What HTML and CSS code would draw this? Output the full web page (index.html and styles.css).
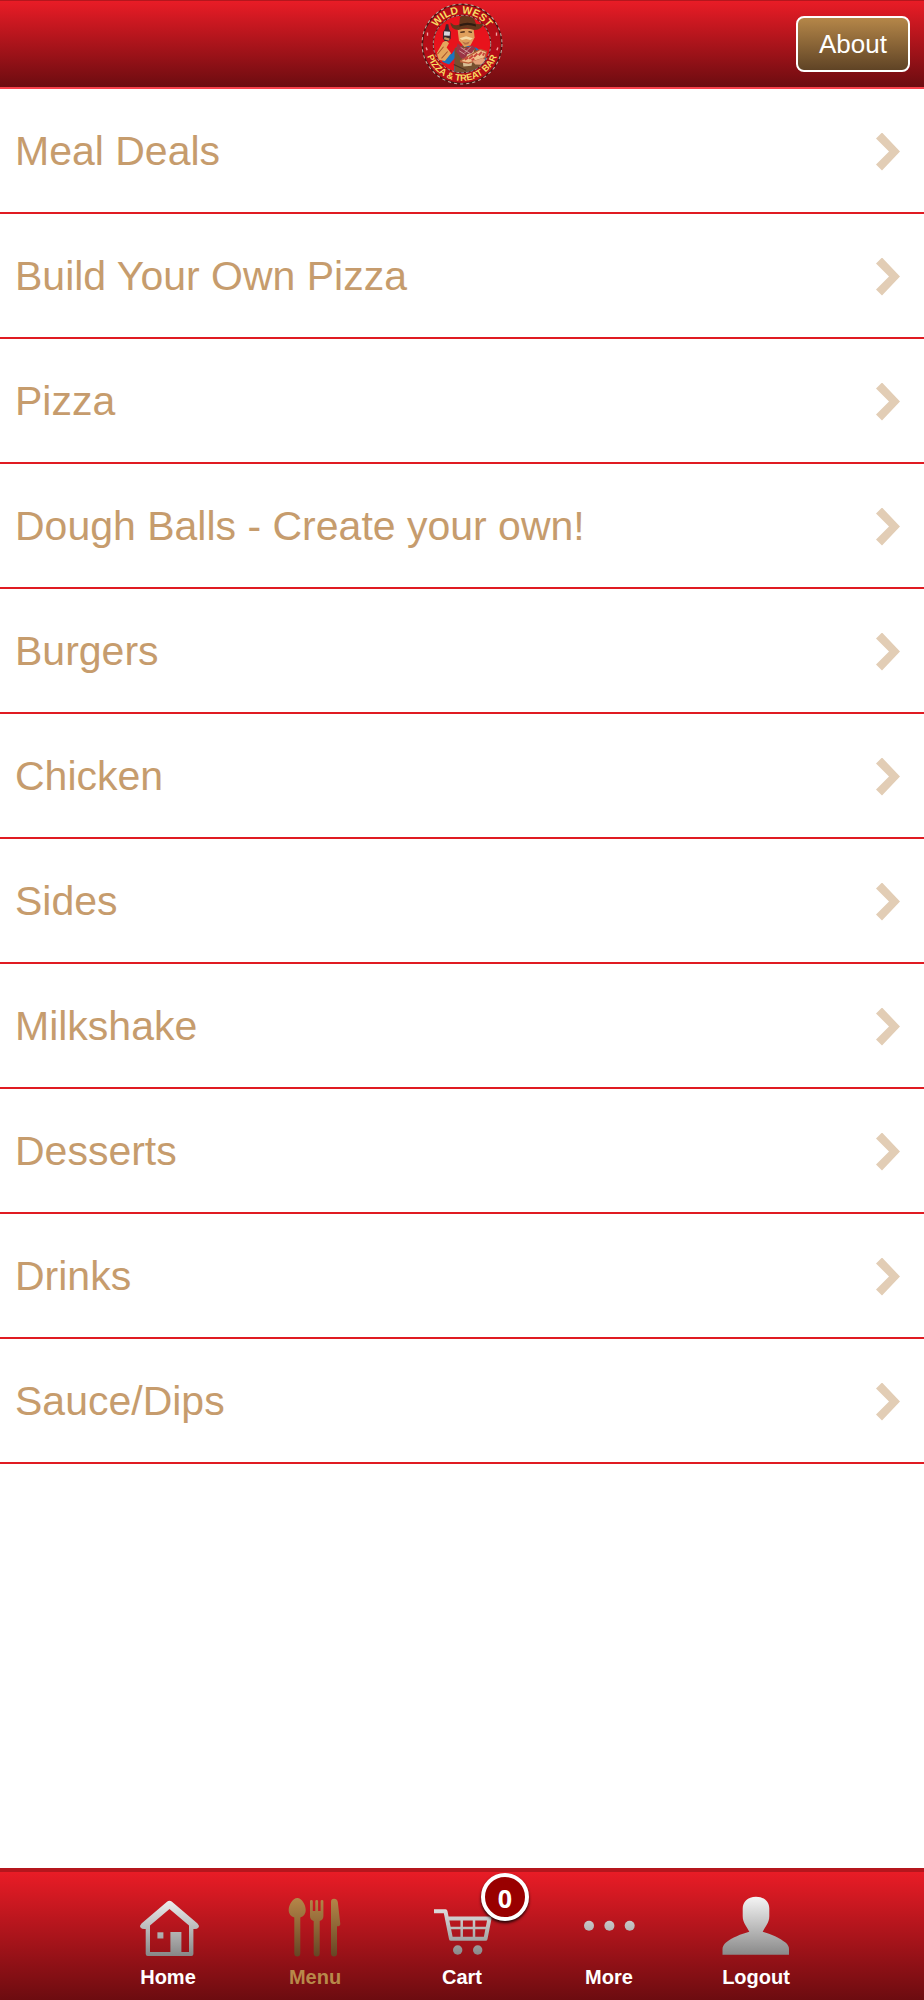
FILE: index.html
```html
<!DOCTYPE html>
<html lang="en">
  <head>
    <meta charset="UTF-8" />
    <meta name="viewport" content="width=device-width, initial-scale=1.0" />
    <title>Wild West Pizza &amp; Treat Bar</title>
    <link rel="stylesheet" href="styles.css" />
  </head>
  <body>
    <header class="header">
      <svg class="logo" viewBox="0 0 240 240" role="img" aria-label="Wild West Pizza &amp; Treat Bar">
        <defs>
          <path id="arc-top" d="M31 120a89 89 0 0 1 178 0" />
          <path id="arc-bottom" d="M12 120a108 108 0 0 0 216 0" />
          <clipPath id="inner"><circle cx="120" cy="120" r="83" /></clipPath>
        </defs>
        <circle cx="120" cy="120" r="116" fill="#b50d17" stroke="#4a1512" stroke-width="4" />
        <circle cx="120" cy="120" r="117" fill="none" stroke="#c9aba0" stroke-width="3" stroke-dasharray="9 9" />
        <circle cx="120" cy="120" r="84" fill="#e8131c" stroke="#5a1a17" stroke-width="3" />
        <circle cx="120" cy="120" r="84" fill="none" stroke="#e0cfc4" stroke-width="2" stroke-dasharray="8 6" />
        <path d="M19 86v10M15 130l3 8M221 86v10M225 130l-3 8" stroke="#f0a0a0" stroke-width="4" />
        <!-- cowboy -->
        <g clip-path="url(#inner)">
          <path d="M68 153l22-4 12-18 26-8 34 8 26 18 6 22-12 14-14-6-2 22-24 11-36-2-10-10 4-40-18 20-20-8z" fill="#1b75bd" />
          <path d="M46 147l18-32 10-5 8 8-7 12 13 17-18 23-18-4z" fill="#e5a65c" />
          <path d="M48 150l18-22M60 162l18-20" stroke="#a6542b" stroke-width="3" />
          <path d="M98 133l25-8 36 8 16 26-4 56-27 12-36-6-10-18z" fill="#77502f" />
          <path d="M118 132l38 2-8 50-24 2z" fill="#d8bd94" />
          <path d="M107 118l20 16 24-10 8 8-10 14-14 4-4 16-14-4-14-20z" fill="#9b3546" />
          <path d="M116 130l28 18M112 140l16 10M146 128l-18 18" stroke="#e5c5bd" stroke-width="2" />
          <path d="M107 76l47-1 3 26-12 23-18 5-16-19z" fill="#e0a05c" />
          <path d="M115 86l13-2M139 84l10 2" stroke="#482715" stroke-width="4" />
          <path d="M113 103l19-6 20 6-8 5-12-3-12 3z" fill="#f5d9a5" />
          <path d="M120 113l11 3 12-3-5 8-10 1z" fill="#b86f45" />
          <path d="M86 57q12 12 26 6l2-21q10-9 20-4 13-7 20 5l7 18q16 4 23-5-4 22-28 23-25-9-47 0-23-3-23-22z" fill="#65371c" />
          <path d="M113 62q23-9 47 0l1 7q-24-9-48 0z" fill="#2f1b11" />
          <path d="M70 76l3-14 7 0 2 14 5 8 0 20-6 8-12-1-5-8 1-18z" fill="#39282f" />
          <path d="M68 83l17 1-1 12-17-1z" fill="#d8d7de" />
          <path d="M68 103l15 4" stroke="#c5965f" stroke-width="7" />
          <path d="M116 169l57-33 19 6-5 19-48 15-23-4z" fill="#f1c28c" stroke="#b85a37" stroke-width="4" />
          <path d="M128 166l10-6M141 163l11-9M155 157l10-9M169 153l9-10M148 167l8-3M181 154l4-8" stroke="#c9473c" stroke-width="6" />
          <path d="M151 171l29-10 12 7-12 13-21-1z" fill="#e4a078" />
          <path d="M96 180l36 17" stroke="#4d301f" stroke-width="3" />
        </g>
        <text class="logo__text logo__text--top"><textPath href="#arc-top" startOffset="50%">WILD WEST</textPath></text>
        <text class="logo__text"><textPath href="#arc-bottom" startOffset="50%">PIZZA &amp; TREAT BAR</textPath></text>
      </svg>
      <button class="btn-about" type="button">About</button>
    </header>

    <main class="menu">
      <ul class="menu__list">
        <li><a class="menu__item" href="#">Meal Deals</a></li>
        <li><a class="menu__item" href="#">Build Your Own Pizza</a></li>
        <li><a class="menu__item" href="#">Pizza</a></li>
        <li><a class="menu__item" href="#">Dough Balls - Create your own!</a></li>
        <li><a class="menu__item" href="#">Burgers</a></li>
        <li><a class="menu__item" href="#">Chicken</a></li>
        <li><a class="menu__item" href="#">Sides</a></li>
        <li><a class="menu__item" href="#">Milkshake</a></li>
        <li><a class="menu__item" href="#">Desserts</a></li>
        <li><a class="menu__item" href="#">Drinks</a></li>
        <li><a class="menu__item" href="#">Sauce/Dips</a></li>
      </ul>
    </main>

    <nav class="tabs">
      <a class="tab" href="#">
        <svg class="tab__icon" viewBox="-2 0 68 64">
          <defs>
            <linearGradient id="silver" gradientUnits="userSpaceOnUse" x1="0" y1="0" x2="0" y2="60">
              <stop offset="0" stop-color="#f6f6f6" />
              <stop offset="1" stop-color="#878787" />
            </linearGradient>
            <linearGradient id="gold" gradientUnits="userSpaceOnUse" x1="0" y1="0" x2="0" y2="60">
              <stop offset="0" stop-color="#b8894a" />
              <stop offset="1" stop-color="#664524" />
            </linearGradient>
          </defs>
          <path
            fill="url(#silver)"
            d="M31.300 5.600Q33.500 4 35.700 5.600L61.500 27.500Q63.500 29.500 62.500 31.500Q61 33.500 57.400 33V58Q57.400 60 55.400 60H11.700Q9.700 60 9.700 58V33Q6 33.500 4.500 31.500Q3.500 29.500 5.500 27.500ZM33.500 13L14 29.500V56H34.400V36H45.400V56H53V29.500Z"
            fill-rule="evenodd"
          />
          <path fill="url(#silver)" d="M21.400 36.300H27.400V42.500H21.400Z" />
        </svg>
        <span class="tab__label">Home</span>
      </a>
      <a class="tab tab--active" href="#">
        <svg class="tab__icon" viewBox="-2 0 68 64">
          <g fill="url(#gold)">
            <path d="M14.300 2C19 2 22.700 9 22.700 14C22.700 18 20.500 20.500 17.300 21.500V57.500A3 3 0 0 1 11.300 57.500V21.500C8 20.500 5.700 18 5.700 14C5.700 9 9.600 2 14.300 2Z" />
            <path d="M27 5.300A1.400 1.400 0 0 1 29.800 5.300V15H32.300V5.300A1.400 1.400 0 0 1 35.100 5.300V15H37.600V5.300A1.400 1.400 0 0 1 40.400 5.300V20Q40.400 24 36.700 25V57.500A3 3 0 0 1 30.700 57.500V25Q27 24 27 20Z" />
            <path d="M48 6Q48 2.700 51 2.700Q54 2.700 54.800 6L57.300 28Q57.300 30.300 54 30.300V57.500A3 3 0 0 1 48 57.500Z" />
          </g>
        </svg>
        <span class="tab__label">Menu</span>
      </a>
      <a class="tab" href="#">
        <svg class="tab__icon" viewBox="-2 0 68 64">
          <g fill="none" stroke="url(#silver)" stroke-linejoin="round">
            <path stroke-width="4" d="M4 15.300H15.500L21 42.800H55.500L59.500 22.500H17" />
            <path stroke-width="2.500" d="M18.500 32H58M31.700 23V43M44 23V43" />
          </g>
          <circle cx="27.700" cy="54" r="4.700" fill="url(#silver)" />
          <circle cx="47.700" cy="54" r="4.700" fill="url(#silver)" />
        </svg>
        <span class="tab__label">Cart</span>
        <span class="tab__badge">0</span>
      </a>
      <a class="tab" href="#">
        <svg class="tab__icon" viewBox="-2 0 68 64">
          <g fill="url(#silver)">
            <circle cx="12" cy="29.700" r="5" />
            <circle cx="32.400" cy="29.700" r="5" />
            <circle cx="52.700" cy="29.700" r="5" />
          </g>
        </svg>
        <span class="tab__label">More</span>
      </a>
      <a class="tab" href="#">
        <svg class="tab__icon" viewBox="-2 0 68 64">
          <path
            fill="url(#silver)"
            d="M32 .7C40.500 .7 45.300 6 45.300 12.500V20C45.300 27 41.500 30 38.700 35.700C47 38 56 42 61.500 46.500Q65 49.500 65 53V58.700H-1.500V53Q-1.500 49.500 2 46.500C8 41.500 17 38 25.300 35.700C22.500 30 18.700 27 18.700 20V12.500C18.700 6 23.500 .7 32 .7Z"
          />
        </svg>
        <span class="tab__label">Logout</span>
      </a>
    </nav>
  </body>
</html>
```
FILE: styles.css
```css
* {
  margin: 0;
  padding: 0;
  box-sizing: border-box;
}

body {
  font-family: 'Liberation Sans', Arial, sans-serif;
  background-color: #fff;
  min-height: 100vh;

  display: flex;
  flex-direction: column;
}

a {
  text-decoration: none;
}

/* HEADER */
.header {
  display: grid;
  grid-template-columns: 1fr auto 1fr;
  align-items: center;
  height: 89px;
  padding: 0 14px;
  background-image: linear-gradient(#e91c26, #6c0c10);
  border-top: 1px solid #b5161d;
  border-bottom: 2px solid #f9414c;
}

.logo {
  grid-column: 2;
  display: block;
  width: 82px;
  height: 82px;
}

.logo__text {
  font-size: 27px;
  font-weight: 700;
  fill: #f7dc62;
  text-anchor: middle;
}

.logo__text--top {
  font-size: 31px;
}

.btn-about {
  justify-self: end;
  width: 114px;
  height: 56px;
  font-family: inherit;
  font-size: 26px;
  color: #fff;
  background-image: linear-gradient(#b8894a, #5c4124);
  background-origin: border-box;
  border: 2px solid #fff;
  border-radius: 8px;
  cursor: pointer;
}

/* MENU */
.menu {
  flex: 1;
}

.menu__list {
  list-style: none;
}

.menu__item {
  display: flex;
  align-items: center;
  justify-content: space-between;
  height: 125px;
  padding: 2px 24px 0 15px;
  font-size: 41px;
  color: #c69c6d;
  border-bottom: 2px solid #e01b22;
}

.menu__item::after {
  content: '';
  width: 24px;
  height: 38px;
  background-color: #e2cdb5;
  clip-path: polygon(6px 0, 100% 50%, 6px 100%, 0 32px, 13px 50%, 0 6px);
}

/* BOTTOM TABS */
.tabs {
  display: flex;
  justify-content: center;
  padding: 24px 0 11px;
  background-image: linear-gradient(#e91c26, #6c0c10);
  border-top: 4px solid #b5161d;
}

.tab {
  position: relative;
  flex: 1;
  max-width: 147px;

  display: flex;
  flex-direction: column;
  align-items: center;
  gap: 5px;
  color: #fff;
}

.tab--active {
  color: #b8894a;
}

.tab__icon {
  width: 68px;
  height: 64px;
}

.tab__label {
  font-size: 20px;
  font-weight: 700;
  line-height: 24px;
}

.tab__badge {
  position: absolute;
  top: -23px;
  left: 50%;
  margin-left: 19px;
  width: 48px;
  height: 48px;
  font-family: 'Open Sans', sans-serif;
  font-size: 25px;
  font-weight: 700;
  line-height: 42px;
  text-align: center;
  background-color: #900;
  border: 4px solid #fff;
  border-radius: 50%;
  box-shadow: 0 2px 3px rgba(0, 0, 0, 0.8);
}
```
